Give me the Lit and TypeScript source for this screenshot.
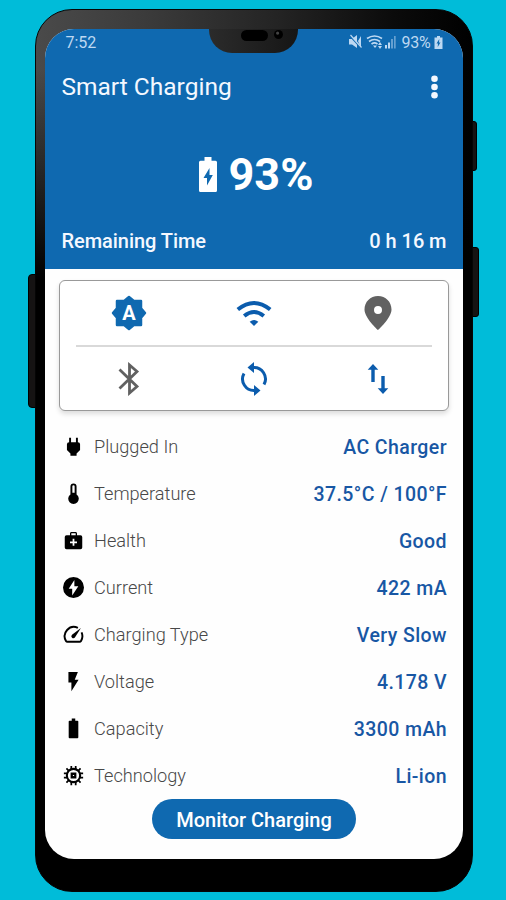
import { LitElement, html, svg, css } from "lit";
import { customElement } from "lit/decorators.js";

const icons: Record<string, unknown> = {
  plug: svg`<path d="M17 7V2h-2.200v5H9.200V2H7v5Q4.500 7 4.500 9.500V16l4 4v2.500h7V20l4-4V9.500Q19.500 7 17 7z"/>`,
  thermo: svg`<path fill-rule="evenodd" d="M15.500 13V4a3.500 3.500 0 0 0-7 0v9a6 6 0 1 0 7 0zM12 2.500a1.300 1.300 0 0 1 1.300 1.300V11h-2.600V3.800A1.300 1.300 0 0 1 12 2.500z"/>`,
  health: svg`<path fill-rule="evenodd" d="M20 6h-4V4c0-1-.7-1.700-1.700-1.700H9.700C8.700 2.300 8 3 8 4v2H4Q2 6 2 8v12q0 2 2 2h16q2 0 2-2V8q0-2-2-2zM9.500 3.800h5V6h-5zM16 15h-3v3h-2v-3H8v-2h3v-3h2v3h3z"/>`,
  current: svg`<path fill-rule="evenodd" d="M12 0a12 12 0 1 0 0 24 12 12 0 1 0 0-24zM13 3.500v7h4.500L10.500 21v-7.500H6.500z"/>`,
  gauge: svg`<g fill="none" stroke="currentColor" stroke-width="2.200" stroke-linejoin="round"><path d="M17 4.500A10.500 10.500 0 0 0 3.400 19.300Q4 20.300 5 20.300H19Q20 20.300 20.600 19.300A10.500 10.500 0 0 0 21.200 9.500"/></g><path d="M20.500 4.500 10.300 12.300a2.300 2.300 0 1 0 3.300 3.200z"/>`,
  bolt: svg`<path d="M6.200 1v12h3.400v10L17.800 10h-4.400L17 1z"/>`,
  battery: svg`<path d="M16.500 3H14V.7h-4V3H7.500Q6.500 3 6.500 4v18q0 1 1 1h9q1 0 1-1V4q0-1-1-1z"/>`,
  chip: svg`<g fill="none" stroke="currentColor" stroke-width="2.400"><circle cx="12" cy="12" r="7.600"/><path d="M9.500 1v4m5-4v4m-5 14v4m5-4v4M1 9.500h4m-4 5h4m14-5h4m-4 5h4M3.900 3.900l2.500 2.500m11.200 0 2.500-2.500M3.900 20.100l2.500-2.500m11.200 0 2.500 2.500" stroke-width="2"/><path d="M10 10h4v4h-4z" stroke-width="2.600"/></g>`,
};

const rows: [string, string, string][] = [
  ["plug", "Plugged In", "AC Charger"],
  ["thermo", "Temperature", "37.5°C / 100°F"],
  ["health", "Health", "Good"],
  ["current", "Current", "422 mA"],
  ["gauge", "Charging Type", "Very Slow"],
  ["bolt", "Voltage", "4.178 V"],
  ["battery", "Capacity", "3300 mAh"],
  ["chip", "Technology", "Li-ion"],
];

@customElement("app-root")
export class AppRoot extends LitElement {
  static styles = css`
    :host { display: block; width: 506px; height: 900px; background: #00bcd9; overflow: hidden; font-family: Roboto, sans-serif; }
    * { box-sizing: border-box; }
    svg { display: block; fill: currentColor; }
    .stage { position: relative; height: 900px; padding: 9px 33px 8px 35px; }
    .key { position: absolute; background: #151313; border: 1px solid #000; }
    .left { left: 28px; top: 274px; width: 12px; height: 134px; border-radius: 4px 0 0 4px; }
    .power { left: 466px; top: 121px; width: 11px; height: 50px; border-radius: 0 3px 3px 0; }
    .volume { left: 466px; top: 247px; width: 13px; height: 70px; border-radius: 0 3px 3px 0; }
    .phone { position: relative; height: 883px; border-radius: 37px; border: 1px solid #050505; padding: 19px 9px 32px;
      background: linear-gradient(180deg, transparent 0, transparent 60px, #000 270px), linear-gradient(90deg, #4a4a4a 0, #3b3b3b 25%, #242424 55%, #0b0b0b 82%, #000 100%); }
    .screen { position: relative; height: 830px; width: 418px; background: #fefefe; border-radius: 29px; overflow: hidden; display: flex; flex-direction: column; }
    .notch { position: absolute; left: 164px; top: 0; width: 89px; height: 24px; border-radius: 0 0 23px 23px; background: linear-gradient(90deg, #2b2b2b, #161616); }
    .speaker { position: absolute; left: 241px; top: 30px; width: 27px; height: 11px; border-radius: 6px; background: #000; }
    .lens { position: absolute; left: 274px; top: 30px; width: 9px; height: 9px; border-radius: 50%; background: radial-gradient(circle at 40% 35%, #444 0 1px, #000 2px); }
    .hero { height: 240px; flex: none; background: #0f69b0; color: #f4f8ff; padding: 0 16.500px; display: flex; flex-direction: column; }
    .status { height: 26px; display: flex; justify-content: space-between; align-items: center; padding: 0 4px; color: #bdd8f2; font-size: 16px; }
    .signals { display: flex; align-items: center; }
    .pct { margin: 0 3px 0 4px; font-size: 16px; letter-spacing: -.2px; }
    .bar { height: 63px; display: flex; justify-content: space-between; align-items: center; }
    .title { font-size: 24.500px; }
    .more { margin-right: 9px; }
    .level { height: 112px; display: flex; justify-content: center; align-items: center; gap: 12px; padding-left: 4px; color: #fff; font-size: 45px; font-weight: 700; }
    .remain { height: 21px; display: flex; justify-content: space-between; align-items: center; font-size: 20px; font-weight: 500; letter-spacing: -.05px; }
    .card { height: 131px; margin: 11px 14px 0; flex: none; border: 1.500px solid #999; border-radius: 6px; background: #fff; box-shadow: 0 3px 5px #0002; padding: 0 16px; }
    .trio { height: 64px; display: grid; grid-template-columns: 106px 143px 106px; align-items: center; justify-items: center; color: #0b5cad; }
    .trio + .trio { height: 66px; border-top: 2px solid #d9d9d9; }
    .off { color: #616161; }
    .list { padding: 12px 16px 0 18px; }
    .row { height: 47px; display: flex; align-items: center; color: #000; }
    .ico { width: 21px; margin-right: 10px; }
    .label { flex: 1; font-size: 18.200px; font-weight: 300; color: #484848; }
    .value { font-size: 19.500px; font-weight: 500; letter-spacing: .42px; padding-top: 2px; color: #1857a4; }
    .btn { align-self: center; height: 40px; width: 204px; flex: none; border: 0; border-radius: 20px; background: #0f69b0; color: #fff; font: 500 20px Roboto, sans-serif; padding: 2px 0 0; }
  `;

  render() {
    return html`<div class="stage">
      <div class="key left"></div><div class="key power"></div><div class="key volume"></div>
      <div class="phone"><div class="screen">
        <div class="hero">
          <div class="status"><span>7:52</span>
            <div class="signals">
              <svg width="49" height="16" viewBox="0 0 49 16">
                <path d="M1 5h3l5-4v13L4 10.500H1zM10 7l3-5v12z"/>
                <path d="M1 1 13 14" stroke="#0f69b0" stroke-width="1.200"/><path d="M2.500 1 13.500 13.500" stroke="currentColor" stroke-width="1.200"/>
                <g fill="none" stroke="currentColor" stroke-width="1.700"><path d="M19 4.500q7.500-5 15 0M21 7.500q5.500-4 11 0M23.500 10.200q3-2.500 6 0"/></g>
                <path d="M25 11.500h4l-2 2.500zM32 8l2 3h-4zM32 15l2-3h-4z"/>
                <path d="M37 11h2v3.500h-2zM40 8.500h2v6h-2z"/><path d="M43 5h2v9.500h-2zM46 2h1.700v12.500H46z" opacity=".5"/>
              </svg>
              <span class="pct">93%</span>
              <svg width="9" height="13" viewBox="0 0 8 13"><path fill-rule="evenodd" d="M2.500 0h3v1.500H8V13H0V1.500h2.500zM4.800 3 2 7.500h1.500L3.200 11 6 6.500H4.500z"/></svg>
            </div>
          </div>
          <div class="bar"><span class="title">Smart Charging</span>
            <svg class="more" width="7" height="24" viewBox="0 0 7 24"><circle cx="3.500" cy="3.700" r="3.300"/><circle cx="3.500" cy="12" r="3.300"/><circle cx="3.500" cy="20.300" r="3.300"/></svg>
          </div>
          <div class="level">
            <svg width="18" height="35" viewBox="0 0 18 35"><path fill-rule="evenodd" d="M5.500 0h7v3.800H16.500q1.500 0 1.500 1.500V33.500q0 1.500-1.500 1.500h-15q-1.500 0-1.500-1.500V5.300q0-1.500 1.500-1.500h4zM10.500 11 4.500 21H8v7.500L13.800 18h-3.300z"/></svg>
            <span>93%</span>
          </div>
          <div class="remain"><span>Remaining Time</span><span>0 h 16 m</span></div>
        </div>
        <div class="card">
          <div class="trio">
            <svg width="36" height="36" viewBox="0 0 36 36"><path fill="#0f69b0" stroke="#0f69b0" stroke-width="2.500" stroke-linejoin="round" d="M18 2 22.800 6H30v7.200L34 18 30 22.800V30h-7.200L18 34 13.200 30H6v-7.200L2 18 6 13.200V6h7.200z"/><text x="18" y="25" text-anchor="middle" font-size="20" font-weight="700" fill="#fff">A</text></svg>
            <svg width="36" height="28" viewBox="0 0 36 28"><g fill="none" stroke="currentColor" stroke-width="4"><path d="M1.800 10.500q16.200-13 32.400 0M8.200 17q9.800-8 19.600 0"/></g><path d="M18 27l-4.300-4.300q4.300-3.600 8.600 0z"/></svg>
            <svg class="off" width="28" height="34" viewBox="0 0 28 34"><path fill-rule="evenodd" d="M14 0C6.300 0 .5 5.900.5 13.400.5 22 14 34 14 34s13.500-12 13.500-20.600C27.500 5.900 21.700 0 14 0zm0 10a4 4 0 1 1 0 8 4 4 0 1 1 0-8z"/></svg>
          </div>
          <div class="trio">
            <svg class="off" width="22" height="34" viewBox="0 0 22 34"><path fill="none" stroke="currentColor" stroke-width="2.800" d="M1.500 7.500 19 24.500 11.500 31V3L19 9.500 1.500 26.500"/></svg>
            <svg width="28" height="36" viewBox="0 0 28 36"><g fill="none" stroke="currentColor" stroke-width="3"><path d="M13 6.500A11.500 11.500 0 0 1 24 23.500M15 29.500A11.500 11.500 0 0 1 4 12.500"/></g><path d="M14 1v11L7.500 6.500zM14 24v11L20.500 29.500z"/></svg>
            <svg width="22" height="30" viewBox="0 0 22 30"><path d="M6 0 11.300 5.700H7.700V18H4.300V5.700H.7zM16 30l-5.300-5.700h3.600V12h3.400v12.300h3.600z"/></svg>
          </div>
        </div>
        <div class="list">${rows.map(([i, l, v]) => html`<div class="row"><svg class="ico" width="21" height="21" viewBox="0 0 24 24">${icons[i]}</svg><span class="label">${l}</span><span class="value">${v}</span></div>`)}</div>
        <button class="btn">Monitor Charging</button>
        <div class="notch"></div>
      </div></div>
      <div class="speaker"></div><div class="lens"></div>
    </div>`;
  }
}
